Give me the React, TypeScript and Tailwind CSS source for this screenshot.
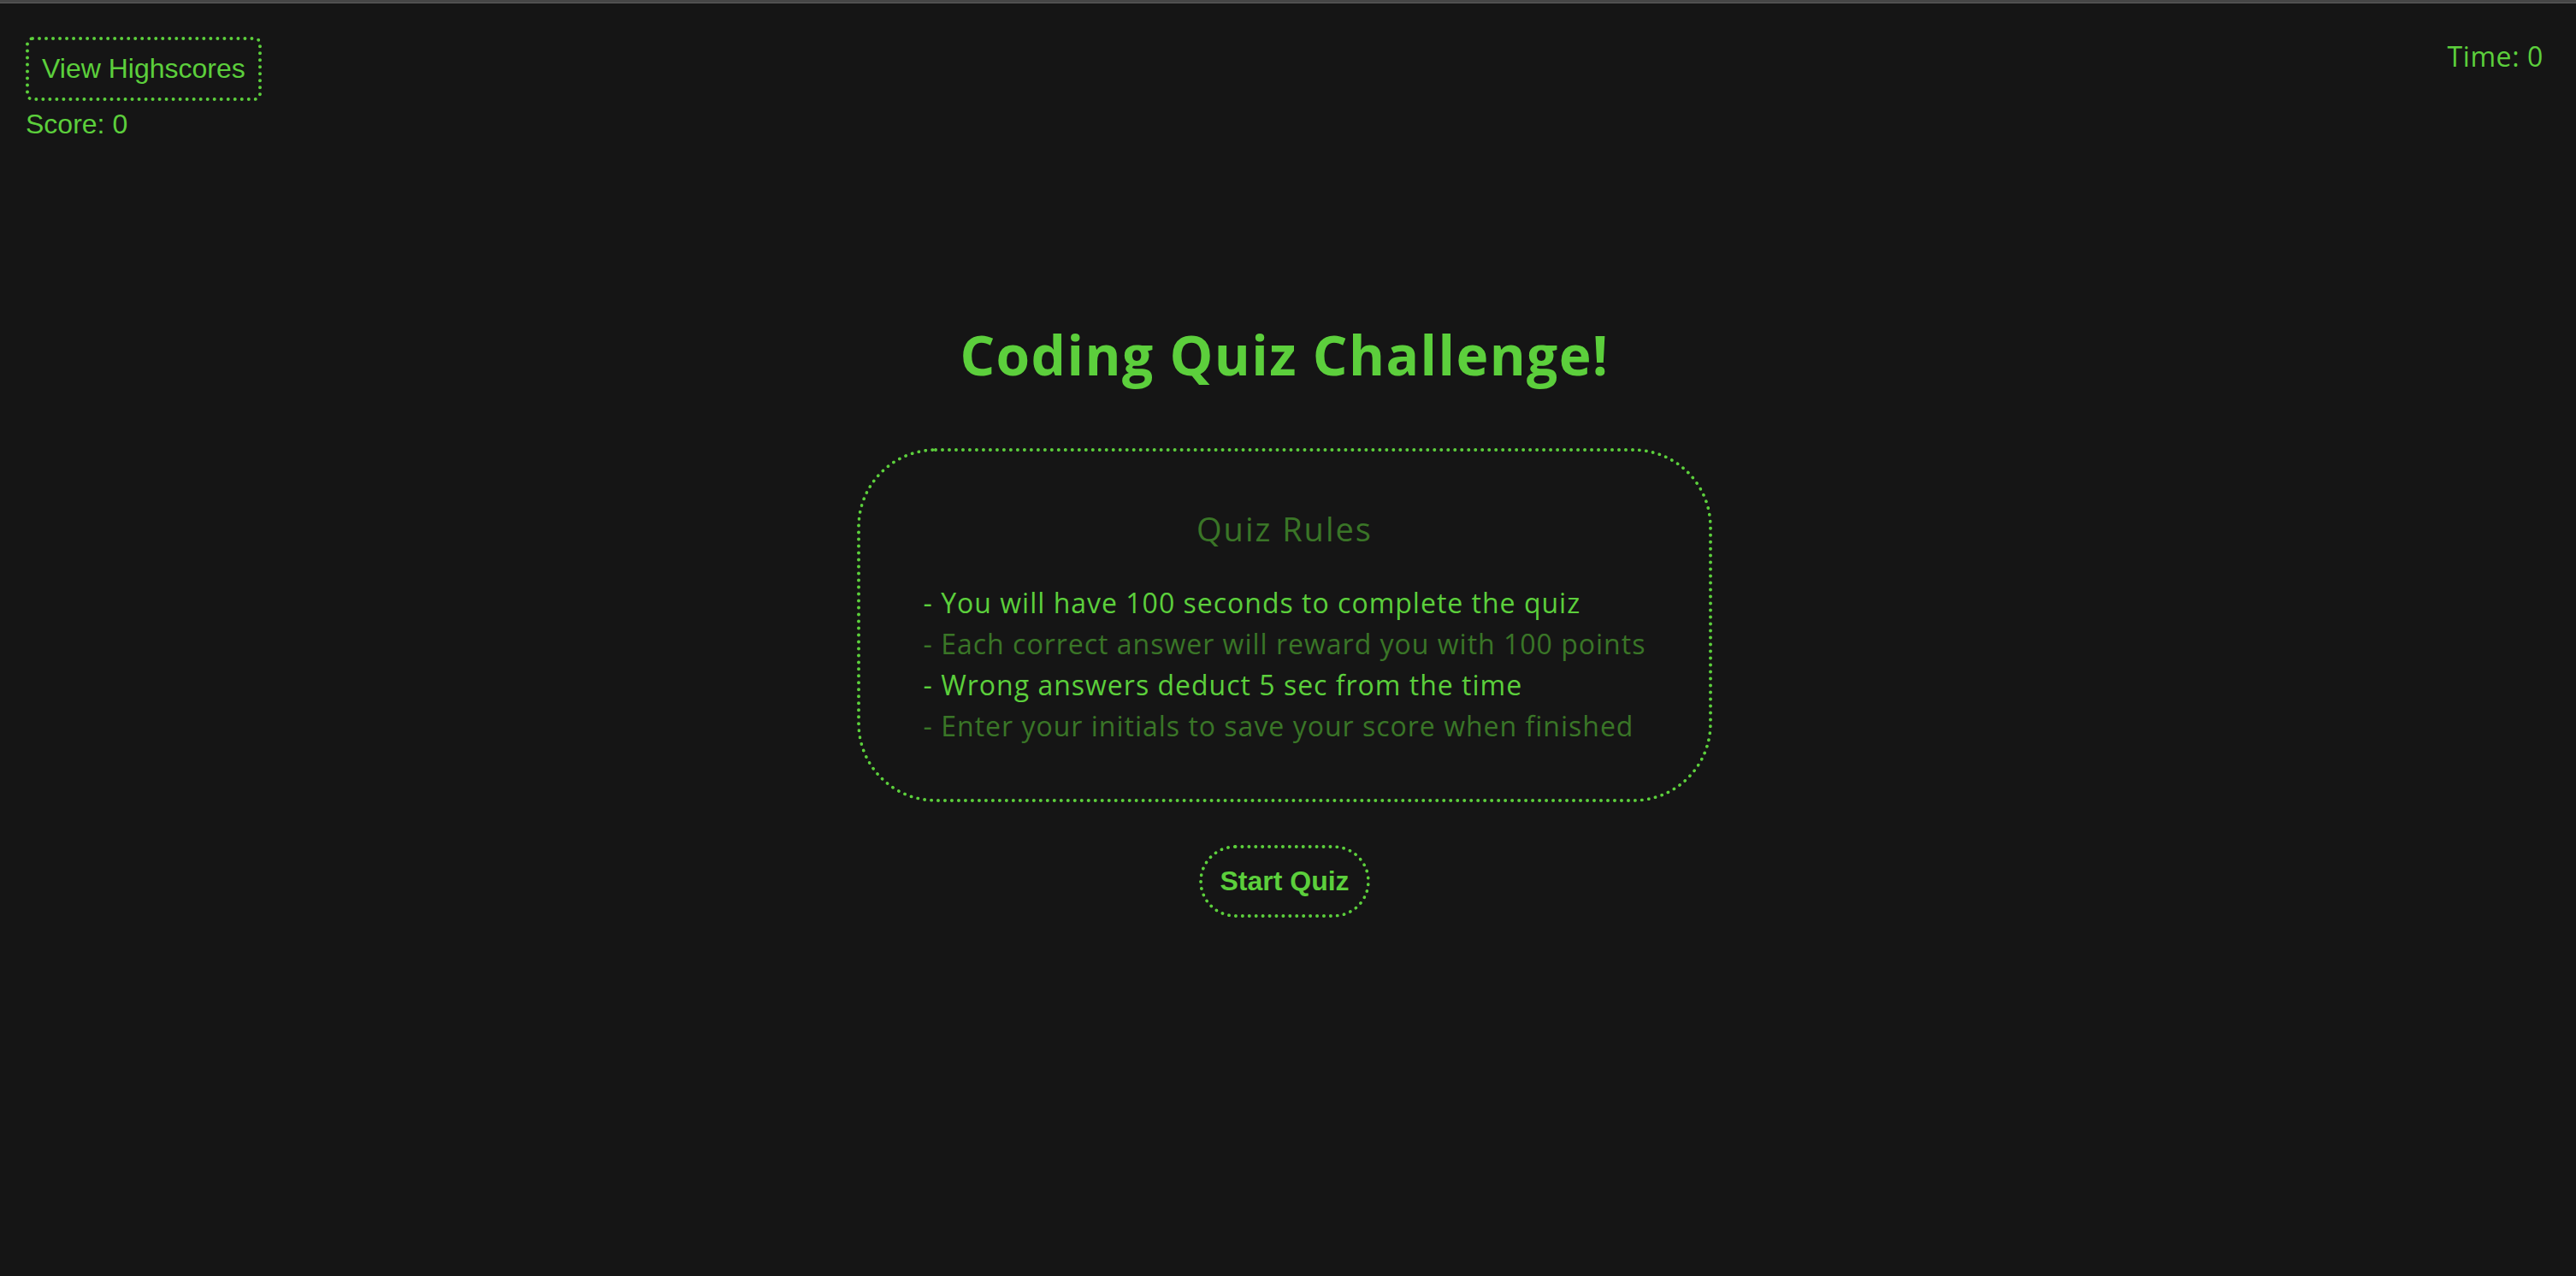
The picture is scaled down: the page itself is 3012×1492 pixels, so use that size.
import React from 'react'

const rules = [
  { text: '- You will have 100 seconds to complete the quiz', bright: true },
  { text: '- Each correct answer will reward you with 100 points', bright: false },
  { text: '- Wrong answers deduct 5 sec from the time', bright: true },
  { text: '- Enter your initials to save your score when finished', bright: false },
]

const poppins = { fontFamily: '"Open Sans", "Noto Sans", sans-serif' }
const arial = { fontFamily: '"Liberation Sans", Arial, sans-serif' }

export default function App() {
  return (
    <div className="min-h-screen w-full bg-[#151515] text-[#5ccf3c]">
      <div className="h-[4px] border-t-[3px] border-[#464646] bg-[#5e5e5e]" />

      <div className="w-[3004px]">
        <header className="flex items-start justify-between px-[30px] pt-[39px]">
          <div className="flex flex-col items-start">
            <button
              style={arial}
              className="rounded-[8px] border-4 border-dotted border-[#5ccf3c] p-[15px] text-[32px] leading-[37px] text-[#5ccf3c]"
            >
              View Highscores
            </button>
            <div style={arial} className="mt-[9px] text-[32px] leading-[37px]">
              Score: 0
            </div>
          </div>
          <div style={poppins} className="mt-[4px] text-[32px] leading-[37px] tracking-[0.6px]">
            Time: 0
          </div>
        </header>

        <main className="flex flex-col items-center">
          <h1 style={poppins} className="mt-[219px] text-[64px] font-bold leading-[64px] tracking-[1.4px]">
            Coding Quiz Challenge!
          </h1>

          <section className="mt-[77px] flex w-[1000px] flex-col items-center rounded-[92px] border-4 border-dotted border-[#5ccf3c] pb-[61px] pt-[66px]">
            <h2 style={poppins} className="text-[38px] leading-[48px] tracking-[2px] text-[#3a7527]">
              Quiz Rules
            </h2>
            <ul style={poppins} className="mt-[39px] text-[32px] leading-[48px] tracking-[1px]">
              {rules.map((r) => (
                <li key={r.text} className={r.bright ? 'text-[#5ccf3c]' : 'text-[#3a7527]'}>
                  {r.text}
                </li>
              ))}
            </ul>
          </section>

          <button
            style={arial}
            className="mt-[50px] rounded-full border-4 border-dotted border-[#5ccf3c] px-[20px] py-[20px] text-[32px] font-bold leading-[37px] text-[#5ccf3c]"
          >
            Start Quiz
          </button>
        </main>
      </div>
    </div>
  )
}
